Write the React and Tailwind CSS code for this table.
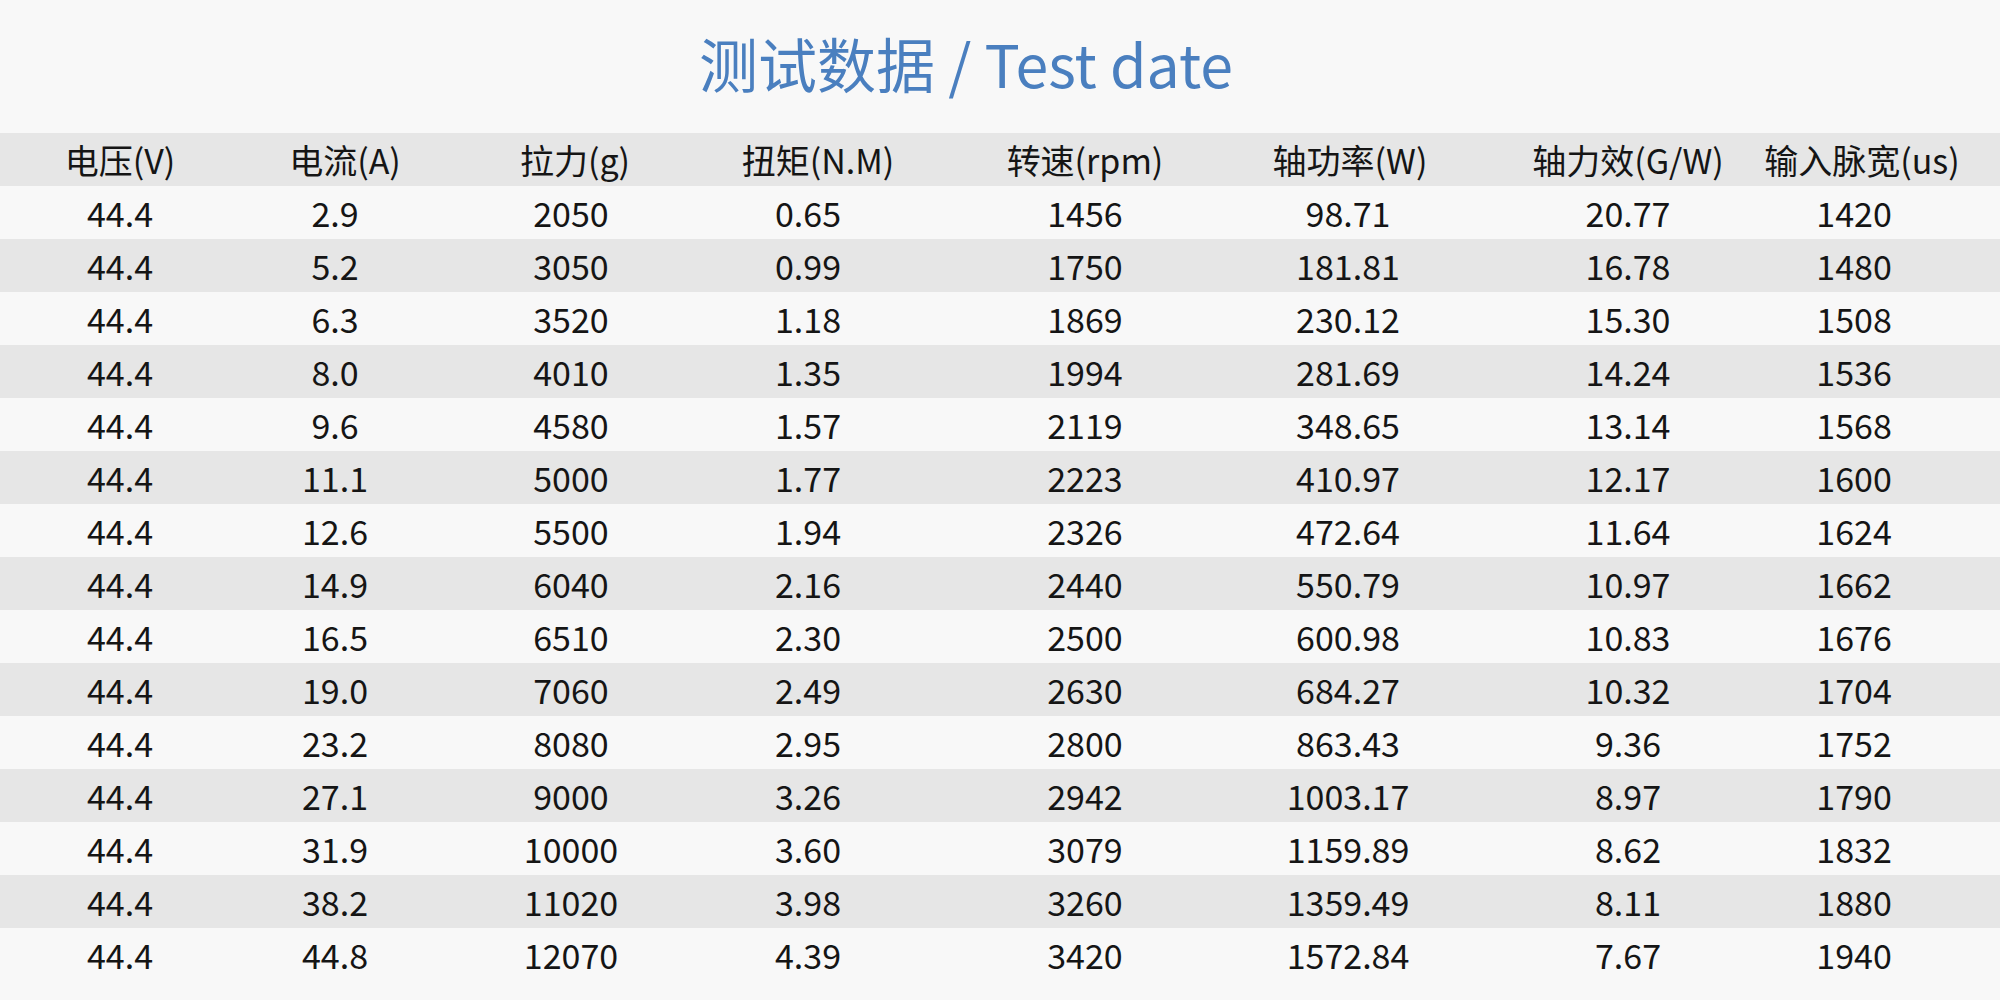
const headers = [
  { label: "电压(V)", shift: "" },
  { label: "电流(A)", shift: "pl-[20px]" },
  { label: "拉力(g)", shift: "pl-[8px]" },
  { label: "扭矩(N.M)", shift: "pl-[20px]" },
  { label: "转速(rpm)", shift: "" },
  { label: "轴功率(W)", shift: "pl-[4px]" },
  { label: "轴力效(G/W)", shift: "" },
  { label: "输入脉宽(us)", shift: "pl-[16px]" },
];

const rows = [
  ["44.4", "2.9", "2050", "0.65", "1456", "98.71", "20.77", "1420"],
  ["44.4", "5.2", "3050", "0.99", "1750", "181.81", "16.78", "1480"],
  ["44.4", "6.3", "3520", "1.18", "1869", "230.12", "15.30", "1508"],
  ["44.4", "8.0", "4010", "1.35", "1994", "281.69", "14.24", "1536"],
  ["44.4", "9.6", "4580", "1.57", "2119", "348.65", "13.14", "1568"],
  ["44.4", "11.1", "5000", "1.77", "2223", "410.97", "12.17", "1600"],
  ["44.4", "12.6", "5500", "1.94", "2326", "472.64", "11.64", "1624"],
  ["44.4", "14.9", "6040", "2.16", "2440", "550.79", "10.97", "1662"],
  ["44.4", "16.5", "6510", "2.30", "2500", "600.98", "10.83", "1676"],
  ["44.4", "19.0", "7060", "2.49", "2630", "684.27", "10.32", "1704"],
  ["44.4", "23.2", "8080", "2.95", "2800", "863.43", "9.36", "1752"],
  ["44.4", "27.1", "9000", "3.26", "2942", "1003.17", "8.97", "1790"],
  ["44.4", "31.9", "10000", "3.60", "3079", "1159.89", "8.62", "1832"],
  ["44.4", "38.2", "11020", "3.98", "3260", "1359.49", "8.11", "1880"],
  ["44.4", "44.8", "12070", "4.39", "3420", "1572.84", "7.67", "1940"],
];

const grid =
  "grid grid-cols-[240px_190px_282px_192px_362px_164px_396px_56px] h-[53px] items-center";

export default function App() {
  return (
    <div
      className="w-[2000px] h-[1000px] overflow-hidden bg-[#f8f8f8] text-[#151515]"
      style={{ fontFamily: '"Noto Sans CJK SC", "Noto Sans", sans-serif' }}
    >
      {/* TITLE */}
      <div className="h-[133px] flex items-center justify-center pr-[68px] pb-[8px]">
        <h1 className="text-[59px] leading-none text-[#4a7fbf] whitespace-nowrap">
          测试数据 / Test date
        </h1>
      </div>

      {/* HEADER */}
      <div className={`${grid} bg-[#e6e6e6] text-[34px] leading-none`}>
        {headers.map((h) => (
          <div key={h.label} className={`flex justify-center whitespace-nowrap ${h.shift}`}>
            {h.label}
          </div>
        ))}
      </div>

      {/* ROWS */}
      {rows.map((r, i) => (
        <div
          key={i}
          className={`${grid} text-[34px] leading-none ${i % 2 === 1 ? "bg-[#e6e6e6]" : "bg-[#f8f8f8]"}`}
        >
          {r.map((v, j) => (
            <div key={j} className="flex justify-center whitespace-nowrap">
              {v}
            </div>
          ))}
        </div>
      ))}
    </div>
  );
}
